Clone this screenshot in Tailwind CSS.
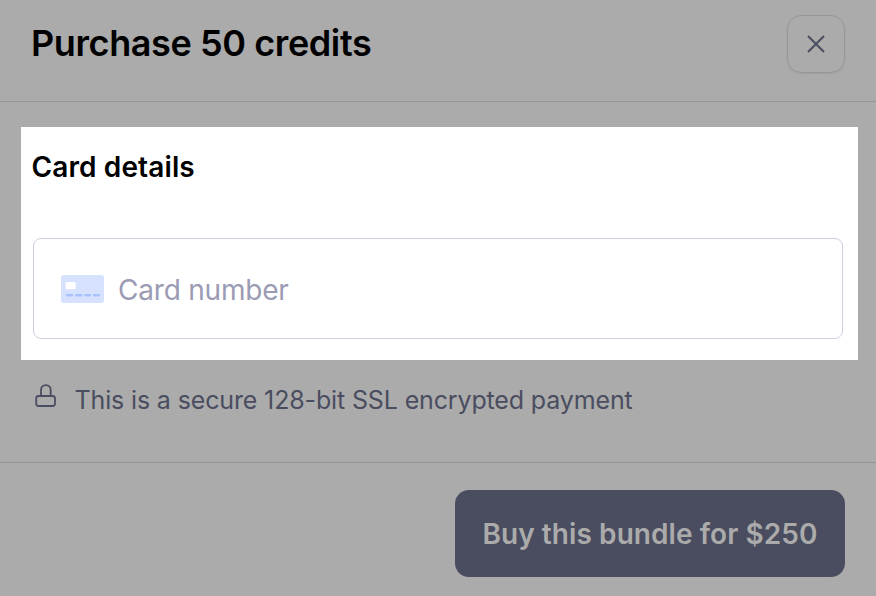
<!DOCTYPE html>
<html lang="en">
<head>
  <meta charset="UTF-8">
  <title>Purchase credits</title>
  <script src="https://cdn.jsdelivr.net/npm/@tailwindcss/browser@4"></script>
</head>
<body class="w-[876px] h-[596px] overflow-hidden bg-[#ababab] font-['Inter',sans-serif]">
  <!-- Header -->
  <div class="h-[102px] border-b border-[#969696] pl-[31px] pr-[31px] pt-[15px] flex justify-between items-start">
    <h1 class="text-[36px] leading-[56px] font-semibold text-black tracking-[-0.4px]">Purchase 50 credits</h1>
    <button class="w-[58px] h-[58px] rounded-[14px] border border-[#959597] shadow-[0_1px_2px_rgba(0,0,0,0.06)] flex items-center justify-center">
      <svg width="18" height="18" viewBox="0 0 18 18" fill="none" stroke="#4a4d5f" stroke-width="2"><path d="M1 1l16 16M17 1L1 17"/></svg>
    </button>
  </div>

  <!-- Card panel -->
  <div class="mt-[25px] ml-[21px] w-[837px] h-[233px] bg-white pl-[10.5px] pt-5">
    <h2 class="text-[28px] leading-10 font-semibold text-black tracking-[0.12px]">Card details</h2>
    <div class="mt-[51px] ml-[1.5px] w-[810px] h-[101px] border border-[#cfcfdf] rounded-lg flex items-center pl-[27px] gap-[14px]">
      <svg class="mt-[1px]" width="43" height="28" viewBox="0 0 43 28">
        <rect width="43" height="28" rx="3" fill="#d5e1fd"/>
        <rect x="4.6" y="7" width="10" height="7.3" rx="1" fill="#fff"/>
        <path d="M6 20.3h5M15.3 20.3h5M24.3 20.3h4.5M33 20.3h4.8" stroke="#a9c1fb" stroke-width="2.4" stroke-linecap="round"/>
      </svg>
      <span class="mt-[2px] text-[28px] tracking-[-0.2px] text-[#9b9bb4]">Card number</span>
    </div>
  </div>

  <!-- Secure note -->
  <div class="h-[103px] border-b border-[#969696] pl-[34px] pt-[24px] flex items-start gap-[18.5px]">
    <svg width="22" height="24" viewBox="0 0 22 24" fill="none" stroke="#4a4d5f" stroke-width="1.8">
      <rect x="2.2" y="12" width="18.8" height="10" rx="2.5"/>
      <path d="M7 12V5.9a4.85 4.85 0 0 1 9.7 0V12"/>
    </svg>
    <span class="text-[25px] leading-8 tracking-[-0.14px] text-[#4a4d5f]">This is a secure 128-bit SSL encrypted payment</span>
  </div>

  <!-- Footer -->
  <div class="flex justify-end pr-[31px] pt-[27px]">
    <button class="w-[390px] h-[87px] rounded-[14px] bg-[#4a4d5f] text-[28px] font-semibold tracking-[0.08px] text-[#ababab]">Buy this bundle for $250</button>
  </div>
</body>
</html>
